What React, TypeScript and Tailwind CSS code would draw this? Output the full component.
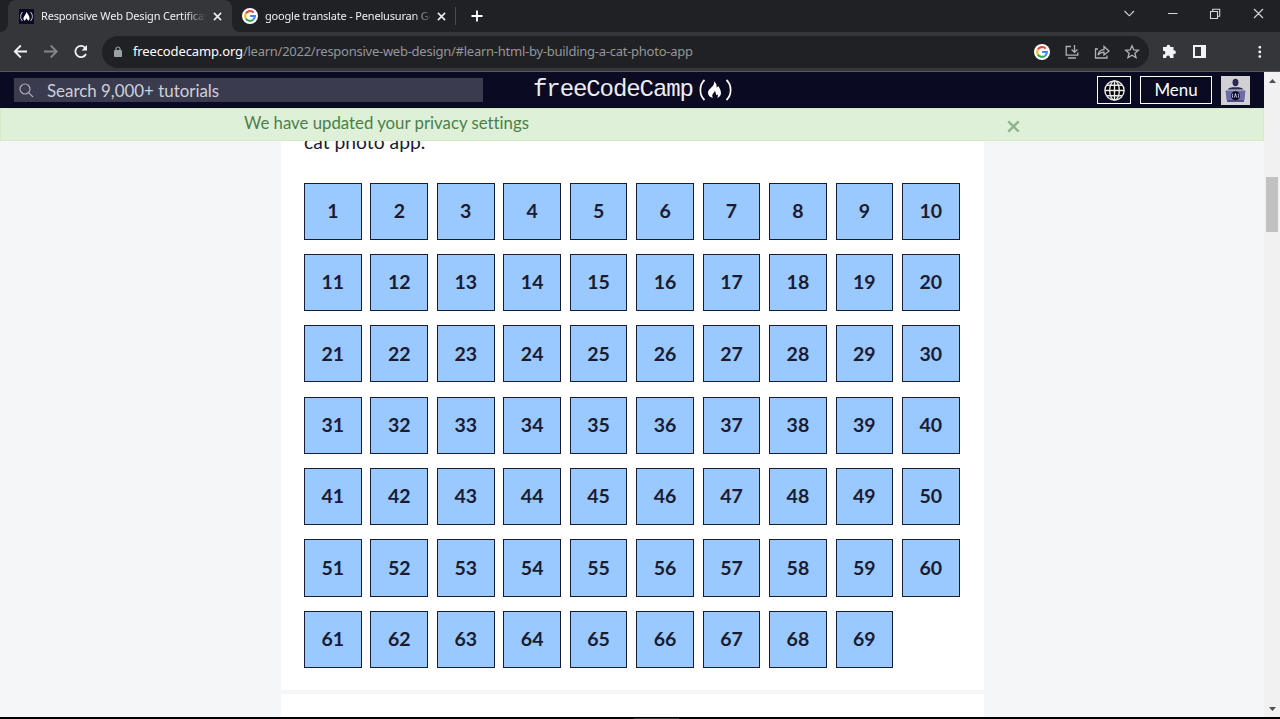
import React from "react";

const lessons = Array.from({ length: 69 }, (_, i) => i + 1);

function GoogleIcon() {
  return (
    <svg width="16" height="16" viewBox="0 0 16 16" className="shrink-0">
      <circle cx="8" cy="8" r="8" fill="#fff" />
      <g fill="none" strokeWidth="2.1">
        <path d="M11.6 4.6A4.9 4.9 0 0 0 3.8 5.5" stroke="#ea4335" />
        <path d="M3.8 5.5A4.9 4.9 0 0 0 3.8 10.5" stroke="#fbbc05" />
        <path d="M3.8 10.5A4.9 4.9 0 0 0 11.2 11.7" stroke="#34a853" />
        <path d="M8.1 8H12.9A4.9 4.9 0 0 1 11.2 11.7" stroke="#4285f4" />
      </g>
    </svg>
  );
}

function Flame({ className }: { className: string }) {
  return (
    <svg viewBox="0 0 14 18" className={className} fill="currentColor">
      <path d="M6.6 0C8.8 1.800 9.600 4.400 9.300 7C10.200 6.800 10.700 6 10.700 5C12.300 7 14 9.800 14 12.700C14 15.300 12.500 17.200 9.800 18C10.700 16.800 11 15.500 10.300 14.200C10 15 9.400 15.200 8.900 14.900C8.300 14.300 8.800 12.400 7.400 10.300C7 12.200 4.900 13.200 4.600 15.200C4.500 16.200 4.800 17.300 5.400 18C2.300 17.400 0 15.500 0 12.500C0 9 3.500 7.600 5.500 4.600C6.500 3.100 6.800 1.500 6.600 0Z" />
    </svg>
  );
}

function Close({ className }: { className: string }) {
  return (
    <svg viewBox="0 0 10 10" className={className} stroke="currentColor" fill="none">
      <path d="M1 1L9 9M9 1L1 9" />
    </svg>
  );
}

function TabStrip() {
  return (
    <div className="flex h-8 shrink-0 bg-[#202124] text-[11px] text-[#eeeff0]">
      <div className="flex w-2 bg-[#35363a]">
        <div className="w-full rounded-br-lg bg-[#202124]" />
      </div>
      <div className="flex w-[224px] items-center rounded-t-lg bg-[#35363a] pl-[11px]">
        <svg className="h-[15px] w-[15px] shrink-0" viewBox="0 0 15 15">
          <rect width="15" height="15" fill="#0a0a23" />
          <path d="M3.500 3C1 5.500 1 9.500 3.500 12M11.500 3C14 5.500 14 9.500 11.500 12" stroke="#d0d0d8" fill="none" />
          <path d="M7.300 3C9 5 10.700 7.500 10.600 9.500C10.500 10.800 9.800 11.400 9.100 11.700L7.500 9.200L5.900 11.700C4.700 11.300 4.200 10 4.500 8.800C5 7 7 5.500 7.300 3Z" fill="#fff" />
        </svg>
        <div className="ml-[7px] w-[165px] overflow-hidden whitespace-nowrap tracking-[-0.18px] [mask-image:linear-gradient(to_right,black_145px,transparent_165px)]">
          Responsive Web Design Certification
        </div>
        <Close className="ml-[7px] h-[9px] w-[9px] stroke-[1.7]" />
      </div>
      <div className="flex w-[223px] bg-[#35363a]">
        <div className="flex w-full items-center rounded-bl-lg bg-[#202124] pl-[10px]">
          <GoogleIcon />
          <div className="ml-[7px] w-[165px] overflow-hidden whitespace-nowrap tracking-[-0.18px] [mask-image:linear-gradient(to_right,black_148px,transparent_168px)]">
            google translate - Penelusuran Google
          </div>
          <Close className="ml-[7px] h-[9px] w-[9px] stroke-[1.7]" />
        </div>
      </div>
      <div className="mt-[7px] h-[18px] w-px bg-[#4a4c50]" />
      <svg className="ml-[15px] mt-[10px] h-3 w-3" viewBox="0 0 12 12" stroke="#fff" strokeWidth="1.8">
        <path d="M6 .5V11.5M.5 6H11.5" />
      </svg>
      <svg className="ml-auto h-8 w-[164px]" viewBox="0 0 164 32" stroke="#d5d6d7" strokeWidth="1.1" fill="none">
        <path d="M8.5 11L13.3 15.8L18 11M52 13.5H61.5M94.5 11.5H101.5V18.5H94.5ZM96.7 11V9.3H103.7V16.3H102M138 9L147 18M147 9L138 18" />
      </svg>
    </div>
  );
}

function Toolbar() {
  return (
    <div className="flex h-10 shrink-0 items-center border-b border-[#57585c] bg-[#35363a]">
      <svg className="h-10 w-[102px] shrink-0" viewBox="0 0 102 40" fill="none" strokeWidth="1.8">
        <path d="M27 19.5H15M20.8 13.5L14.8 19.5L20.8 25.5" stroke="#f1f3f4" />
        <path d="M44 19.5H56M50.7 13.5L56.7 19.5L50.7 25.5" stroke="#85868a" />
        <path d="M86 22A5.6 5.6 0 1 1 84.9 15.5" stroke="#f1f3f4" />
        <path d="M87 13V18.5H81.5Z" fill="#f1f3f4" />
      </svg>
      <div className="flex h-8 w-[1047px] shrink-0 items-center rounded-full bg-[#202124] pl-[12px]">
        <svg className="h-[11px] w-2" viewBox="0 0 8 11">
          <rect y="4" width="8" height="7" rx=".8" fill="#9aa0a6" />
          <path d="M2 5V3A2 2 0 0 1 6 3V5" stroke="#9aa0a6" strokeWidth="1.2" fill="none" />
        </svg>
        <div className="ml-[11px] whitespace-nowrap text-[13px] tracking-[-0.255px] text-[#94969a]">
          <span className="tracking-[-0.13px] text-white">freecodecamp.org</span>/learn/2022/responsive-web-design/#learn-html-by-building-a-cat-photo-app
        </div>
        <div className="ml-auto flex items-center pr-[9px]">
          <GoogleIcon />
          <svg className="ml-[14px] h-4 w-[76px]" viewBox="0 0 76 16" fill="none" stroke="#aeb1b5" strokeWidth="1.3">
            <path d="M7 2.5H2.2V11.2H13.8V8.5M4 14H12M10.5 1V8M7.6 5.5L10.5 8.4L13.4 5.5" />
            <path d="M34 5H31.5V14H43V11.5M34 11C34.5 7.5 36.5 5.8 40 5.6V2.5L45 7L40 11V8.2C37.5 8.2 35.5 9 34 11Z" />
            <path d="M68 1.8L69.8 5.9L74.3 6.3L70.9 9.2L72 13.6L68 11.2L64 13.6L65.1 9.2L61.7 6.3L66.2 5.9Z" />
          </svg>
        </div>
      </div>
      <svg className="h-10 w-[131px]" viewBox="0 0 131 40" fill="#f1f3f4">
        <path d="M14.500 15H17.500V14.700A1.900 1.900 0 0 1 21.300 14.700V15H24.500V18.300H25A1.900 1.900 0 0 1 25 22.100H24.500V26H21V25.500A1.900 1.900 0 0 0 17.200 25.500V26H14V22.600H14.500A1.900 1.900 0 0 0 14.500 18.800H14V15Z" />
        <path fillRule="evenodd" d="M44 13H57V26H44ZM46 15V24H52V15Z" />
        <rect x="109.5" y="14" width="2.6" height="2.6" rx=".8" />
        <rect x="109.5" y="18.6" width="2.6" height="2.6" rx=".8" />
        <rect x="109.5" y="23.2" width="2.6" height="2.6" rx=".8" />
      </svg>
    </div>
  );
}

function SiteHeader() {
  return (
    <header className="flex h-9 shrink-0 items-center bg-[#0a0a23] pl-[14px] pr-[14px] text-white">
      <div className="flex h-6 w-[469px] items-center bg-[#3b3b4f] pl-[5px] text-[#d0d0d5]">
        <svg className="h-[15px] w-[15px]" viewBox="0 0 15 15" fill="none" stroke="#a9a9b5" strokeWidth="1.2">
          <circle cx="6" cy="6" r="5" />
          <path d="M9.6 9.6L14 14" />
        </svg>
        <span className="ml-[13px] mt-px whitespace-nowrap text-[16.9px]">Search 9,000+ tutorials</span>
      </div>
      <div className="ml-[50px] flex h-9 items-center font-['Liberation_Mono',monospace] text-[24px] leading-none tracking-[-1.08px] text-[#ededf2]">
        <span>freeCodeCamp</span>
        <svg className="ml-[5px] h-[22px] w-[8px]" viewBox="0 0 8 22" fill="none" stroke="#fff" strokeWidth="1.7">
          <path d="M6.5 1C1 6 1 16 6.5 21" />
        </svg>
        <Flame className="-mt-[2px] ml-[2px] h-[17px] w-[13px] text-white" />
        <svg className="ml-[4px] h-[22px] w-[8px]" viewBox="0 0 8 22" fill="none" stroke="#fff" strokeWidth="1.7">
          <path d="M1.5 1C7 6 7 16 1.5 21" />
        </svg>
      </div>
      <div className="ml-auto flex items-center">
        <div className="flex h-7 w-[34px] items-center justify-center border border-white">
          <svg className="h-[21px] w-[21px]" viewBox="0 0 21 21" fill="#000" stroke="#e8e8e8" strokeWidth="1.4">
            <circle cx="10.5" cy="10.5" r="9.6" />
            <ellipse cx="10.5" cy="10.5" rx="4.8" ry="9.6" />
            <path d="M10.5 1V20M1 10.5H20M3 5.3H18M3 15.7H18" />
          </svg>
        </div>
        <div className="ml-[9px] flex h-7 w-[72px] items-center justify-center border border-white text-[16.9px]">Menu</div>
        <svg className="ml-[9px] h-[29px] w-[29px]" viewBox="0 0 29 29">
          <rect width="29" height="29" fill="#d0d0d5" />
          <ellipse cx="14.500" cy="6.500" rx="3" ry="3.700" fill="#2a2a50" />
          <path d="M6.500 13.500C7.500 11.800 10 11.300 14.500 11.300S21.500 11.800 22.500 13.500Z" fill="#2a2a50" />
          <path d="M4.500 14.500H24.500L23.500 24H5.500Z" fill="#6c6ca8" />
          <path d="M6 24H23V26H6Z" fill="#505087" />
          <circle cx="14.500" cy="19.700" r="4.500" fill="#0a0a23" />
          <path d="M11.800 17.700Q10.800 19.700 11.800 21.700M17.200 17.700Q18.200 19.700 17.200 21.700M13.500 21.500L14.500 17.500L15.500 21.500" stroke="#d0d0ee" strokeWidth=".9" fill="none" />
        </svg>
      </div>
    </header>
  );
}

export default function App() {
  return (
    <div className="flex h-[719px] w-[1280px] flex-col overflow-hidden bg-black font-['Noto_Sans',sans-serif]">
      <TabStrip />
      <Toolbar />
      <div className="flex h-[645px] shrink-0">
        <div className="flex w-[1264px] flex-col bg-[#f5f6f7] font-[Lato,sans-serif] [font-variant-ligatures:none]">
          <SiteHeader />
          <div className="flex h-[33px] shrink-0 items-center border border-[#d6e9c6] bg-[#dff0d8] pl-[243px] text-[16.8px] text-[#4b7f4a]">
            <span className="-mt-[3px] w-[763px]">We have updated your privacy settings</span>
            <Close className="mt-[3px] h-[13px] w-[13px] stroke-[1.9] text-[#90b58d]" />
          </div>
          <main className="ml-[281px] flex h-[576px] w-[703px] flex-col overflow-hidden">
            <section className="h-[549px] shrink-0 bg-white pl-[23px]">
              <p className="-mt-[12px] h-[53.5px] text-[19.3px] leading-[26px] text-[#1b1b32]">cat photo app.</p>
              <div className="grid grid-cols-[repeat(10,57.7px)] gap-x-[8.75px] gap-y-[14.05px]">
                {lessons.map((n) => (
                  <div
                    key={n}
                    className="flex h-[57.3px] items-center justify-center border border-[#1b1b32] bg-[#99c9ff] pb-[1.2px] text-[19.5px] font-bold text-[#1b1b32]"
                  >
                    {n}
                  </div>
                ))}
              </div>
            </section>
            <section className="mt-1 grow bg-white" />
          </main>
        </div>
        <div className="flex w-4 flex-col items-center bg-[#f1f1f1]">
          <svg className="mt-[7px] h-[4px] w-[7px]" viewBox="0 0 7 4" fill="#505050">
            <path d="M0 4L3.500 0L7 4Z" />
          </svg>
          <div className="mt-[94px] h-[55px] w-3 bg-[#c1c1c1]" />
          <svg className="mb-[6px] mt-auto h-[4px] w-[7px]" viewBox="0 0 7 4" fill="#505050">
            <path d="M0 0H7L3.500 4Z" />
          </svg>
        </div>
      </div>
      <div className="ml-[634px] mt-px h-px w-[45px] bg-[#333]" />
    </div>
  );
}
